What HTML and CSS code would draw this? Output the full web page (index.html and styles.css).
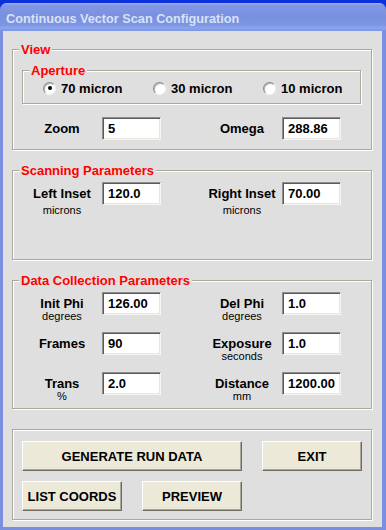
FILE: index.html
```html
<!DOCTYPE html>
<html>
<head>
<meta charset="utf-8">
<title>Continuous Vector Scan Configuration</title>
<link rel="stylesheet" href="styles.css">
</head>
<body>
<div class="window">
  <div class="titlebar">Continuous Vector Scan Configuration</div>
  <div class="client">
    <section class="frame view">
      <div class="legend">View</div>
      <div class="frame aperture">
        <div class="legend">Aperture</div>
        <div class="radios">
          <label class="radio-item"><span class="radio checked"></span>70 micron</label>
          <label class="radio-item"><span class="radio"></span>30 micron</label>
          <label class="radio-item"><span class="radio"></span>10 micron</label>
        </div>
      </div>
      <div class="fields zoom-row">
        <div class="lbl col1"><div class="name">Zoom</div></div>
        <input class="entry col2" type="text" value="5">
        <div class="lbl col4"><div class="name">Omega</div></div>
        <input class="entry col5" type="text" value="288.86">
      </div>
    </section>

    <section class="frame scanning">
      <div class="legend">Scanning Parameters</div>
      <div class="fields scan-fields">
        <div class="lbl col1"><div class="name">Left Inset</div><div class="unit">microns</div></div>
        <input class="entry col2" type="text" value="120.0">
        <div class="lbl col4"><div class="name">Right Inset</div><div class="unit">microns</div></div>
        <input class="entry col5" type="text" value="70.00">
      </div>
    </section>

    <section class="frame data">
      <div class="legend">Data Collection Parameters</div>
      <div class="fields data-fields">
        <div class="lbl col1"><div class="name">Init Phi</div><div class="unit">degrees</div></div>
        <input class="entry col2" type="text" value="126.00">
        <div class="lbl col4"><div class="name">Del Phi</div><div class="unit">degrees</div></div>
        <input class="entry col5" type="text" value="1.0">

        <div class="lbl col1"><div class="name">Frames</div></div>
        <input class="entry col2" type="text" value="90">
        <div class="lbl col4"><div class="name">Exposure</div><div class="unit">seconds</div></div>
        <input class="entry col5" type="text" value="1.0">

        <div class="lbl col1"><div class="name">Trans</div><div class="unit">%</div></div>
        <input class="entry col2" type="text" value="2.0">
        <div class="lbl col4"><div class="name">Distance</div><div class="unit">mm</div></div>
        <input class="entry col5" type="text" value="1200.00">
      </div>
    </section>

    <section class="frame actions">
      <div class="buttons">
        <button class="btn wide" type="button">GENERATE RUN DATA</button>
        <button class="btn exit" type="button">EXIT</button>
        <button class="btn" type="button">LIST COORDS</button>
        <button class="btn" type="button">PREVIEW</button>
      </div>
    </section>
  </div>
</div>
</body>
</html>
```
FILE: styles.css
```css
* { box-sizing: border-box; }

html, body {
  margin: 0;
  padding: 0;
}

body {
  width: 386px;
  height: 530px;
  overflow: hidden;
  background: #0c30dc;
  padding-top: 3px;
  font-family: "Liberation Sans", Arial, sans-serif;
}

.window {
  width: 386px;
  height: 527px;
  background: #7a8fe0;
  border-radius: 7px 7px 0 0;
  padding: 0 4px 3px 3px;
  display: flex;
  flex-direction: column;
}

.titlebar {
  height: 28px;
  margin: 0 -4px 0 -3px;
  padding: 4px 0 0 6px;
  line-height: 24px;
  border-radius: 7px 7px 0 0;
  background: linear-gradient(to bottom, #a3b6f0 0, #8298e4 2px, #7a90df 14px, #7d95e2 22px, #8ba6ee 25px, #7d93e0 28px);
  color: #d8e2f8;
  font-weight: bold;
  font-size: 12.7px;
  white-space: nowrap;
}

.client {
  flex: 1;
  background: #dfdfdf;
  padding: 18px 10px 0 9px;
  display: flex;
  flex-direction: column;
  gap: 20px;
}

.frame {
  border: 1px solid #a9a89a;
  box-shadow: inset 1px 1px 0 #fff, 1px 1px 0 #fff;
}

.legend {
  width: max-content;
  margin: -8px 0 0 6px;
  padding: 0 2px;
  height: 16px;
  line-height: 16px;
  background: #dfdfdf;
  color: #ff0000;
  font-weight: bold;
  font-size: 13px;
}

.view { height: 101px; }
.scanning { height: 90px; }
.data { height: 129px; }
.actions { height: 91px; }

.aperture {
  height: 34px;
  margin: 12px 10px 0 9px;
}

.radios {
  display: grid;
  grid-template-columns: 110px 110px 110px;
  padding-left: 20px;
  height: 18px;
}

.radio-item {
  display: flex;
  align-items: center;
  gap: 5px;
  height: 18px;
  font-weight: bold;
  font-size: 13px;
  color: #000;
  white-space: nowrap;
}

.radio {
  width: 13px;
  height: 13px;
  border-radius: 50%;
  flex: none;
  background: radial-gradient(circle at 60% 60%, #ffffff 0, #ffffff 45%, #ececec 100%);
  border: 1px solid;
  border-color: #8a8a8a #f4f4f4 #f4f4f4 #8a8a8a;
  box-shadow: inset 1px 1px 0 #b8b8b8;
  display: flex;
  align-items: center;
  justify-content: center;
}

.radio.checked::after {
  content: "";
  width: 4px;
  height: 4px;
  border-radius: 50%;
  background: #000;
}

.fields {
  display: grid;
  grid-template-columns: 80px 59px 41px 80px 59px;
  grid-auto-rows: 23px;
  row-gap: 17px;
  padding-left: 9px;
}

.zoom-row { margin-top: 13px; }
.scan-fields { margin-top: 3px; }
.data-fields { margin-top: 3px; }

.col1 { grid-column: 1; }
.col2 { grid-column: 2; }
.col4 { grid-column: 4; }
.col5 { grid-column: 5; }

.lbl {
  text-align: center;
  color: #000;
  white-space: nowrap;
}

.lbl .name {
  font-weight: bold;
  font-size: 13px;
  line-height: 23px;
  height: 23px;
}

.lbl .unit {
  font-size: 11px;
  line-height: 12px;
  margin-top: -5px;
}

.scan-fields .lbl .unit { margin-top: -1px; }

.entry {
  width: 59px;
  height: 23px;
  margin: 0;
  padding: 0 0 0 5px;
  background: #fff;
  border: 1px solid;
  border-color: #8e8e8e #f6f6f0 #f6f6f0 #8e8e8e;
  box-shadow: inset 1px 1px 0 #5a5a5a, inset -1px -1px 0 #e6e6dc;
  font-family: "Liberation Sans", Arial, sans-serif;
  font-weight: bold;
  font-size: 13px;
  color: #000;
  outline: none;
}

.buttons {
  display: grid;
  grid-template-columns: 100px 100px 100px;
  grid-auto-rows: 30px;
  column-gap: 20px;
  row-gap: 10px;
  padding: 11px 0 0 9px;
}

.btn {
  margin: 0;
  padding: 0;
  background: #ece9d8;
  border: 1px solid;
  border-color: #ffffff #6f6d63 #6f6d63 #ffffff;
  box-shadow: inset -1px -1px 0 #aca899;
  font-family: "Liberation Sans", Arial, sans-serif;
  font-weight: bold;
  font-size: 13px;
  color: #000;
  white-space: nowrap;
}

.btn.wide { grid-column: 1 / span 2; }
.btn.exit { grid-column: 3; }
```
